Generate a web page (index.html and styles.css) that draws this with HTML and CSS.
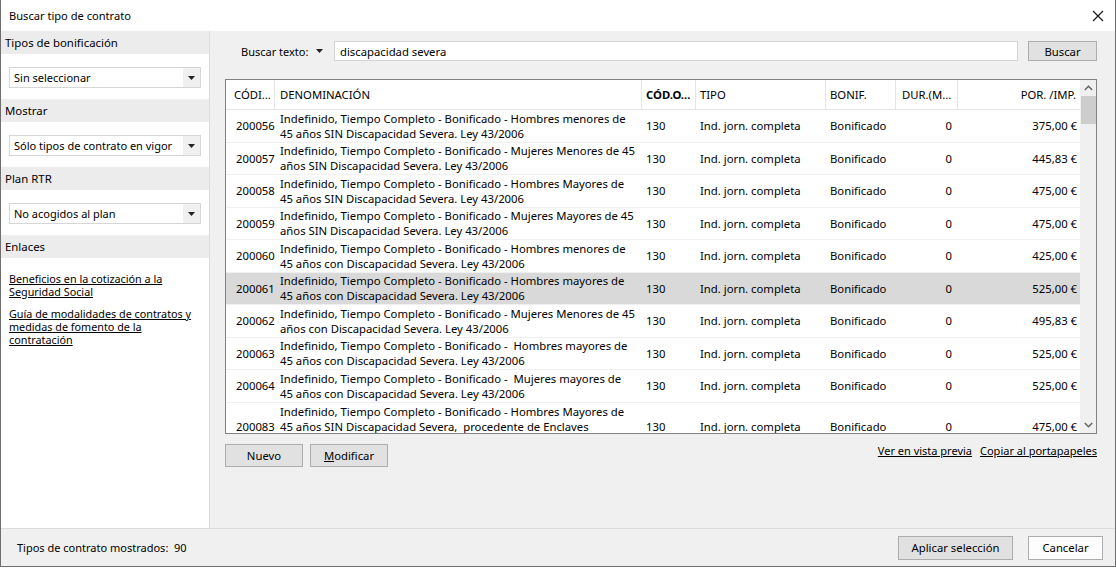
FILE: index.html
```html
<!DOCTYPE html>
<html lang="es">
<head>
<meta charset="utf-8">
<title>Buscar tipo de contrato</title>
<link rel="stylesheet" href="styles.css">
</head>
<body>
<div class="window">
  <div class="titlebar">
    <span class="title">Buscar tipo de contrato</span>
    <svg class="close" width="12" height="12" viewBox="0 0 12 12"><path d="M1 1L11 11M11 1L1 11" stroke="#111" stroke-width="1.1" fill="none"/></svg>
  </div>
  <div class="content">
    <aside class="side">
      <div class="side-head">Tipos de bonificación</div>
      <div class="side-box"><div class="select"><span>Sin seleccionar</span><span class="drop"><svg width="7" height="4" viewBox="0 0 7 4"><path d="M0 0H7L3.5 4Z" fill="#222"/></svg></span></div></div>
      <div class="side-head">Mostrar</div>
      <div class="side-box"><div class="select"><span>Sólo tipos de contrato en vigor</span><span class="drop"><svg width="7" height="4" viewBox="0 0 7 4"><path d="M0 0H7L3.5 4Z" fill="#222"/></svg></span></div></div>
      <div class="side-head">Plan RTR</div>
      <div class="side-box"><div class="select"><span>No acogidos al plan</span><span class="drop"><svg width="7" height="4" viewBox="0 0 7 4"><path d="M0 0H7L3.5 4Z" fill="#222"/></svg></span></div></div>
      <div class="side-head">Enlaces</div>
      <div class="links">
        <a class="slink" href="#">Beneficios en la cotización a la <br>Seguridad Social</a>
        <a class="slink" href="#">Guía de modalidades de contratos y <br>medidas de fomento de la <br>contratación</a>
      </div>
    </aside>
    <main class="main">
      <div class="search">
        <span class="search-label">Buscar texto:</span>
        <svg class="search-drop" width="7" height="4" viewBox="0 0 7 4"><path d="M0 0H7L3.5 4Z" fill="#222"/></svg>
        <div class="input">discapacidad severa</div>
        <button class="btn btn-search">Buscar</button>
      </div>
      <div class="table">
        <div class="grid">
          <div class="hcell c-code">CÓDI...</div>
          <div class="hcell c-den">DENOMINACIÓN</div>
          <div class="hcell c-cod bold">CÓD.O...</div>
          <div class="hcell c-tipo">TIPO</div>
          <div class="hcell c-bon">BONIF.</div>
          <div class="hcell c-dur">DUR.(M...</div>
          <div class="hcell c-por">POR. /IMP.</div>

          <div class="row">
            <div class="cell c-code">200056</div>
            <div class="cell c-den"><span>Indefinido, Tiempo Completo - Bonificado - Hombres menores de</span><span>45 años SIN Discapacidad Severa. Ley 43/2006</span></div>
            <div class="cell c-cod">130</div><div class="cell c-tipo">Ind. jorn. completa</div><div class="cell c-bon">Bonificado</div><div class="cell c-dur">0</div><div class="cell c-por">375,00 €</div>
          </div>
          <div class="row">
            <div class="cell c-code">200057</div>
            <div class="cell c-den"><span>Indefinido, Tiempo Completo - Bonificado - Mujeres Menores de 45</span><span>años SIN Discapacidad Severa. Ley 43/2006</span></div>
            <div class="cell c-cod">130</div><div class="cell c-tipo">Ind. jorn. completa</div><div class="cell c-bon">Bonificado</div><div class="cell c-dur">0</div><div class="cell c-por">445,83 €</div>
          </div>
          <div class="row">
            <div class="cell c-code">200058</div>
            <div class="cell c-den"><span>Indefinido, Tiempo Completo - Bonificado - Hombres Mayores de</span><span>45 años SIN Discapacidad Severa. Ley 43/2006</span></div>
            <div class="cell c-cod">130</div><div class="cell c-tipo">Ind. jorn. completa</div><div class="cell c-bon">Bonificado</div><div class="cell c-dur">0</div><div class="cell c-por">475,00 €</div>
          </div>
          <div class="row">
            <div class="cell c-code">200059</div>
            <div class="cell c-den"><span>Indefinido, Tiempo Completo - Bonificado - Mujeres Mayores de 45</span><span>años SIN Discapacidad Severa. Ley 43/2006</span></div>
            <div class="cell c-cod">130</div><div class="cell c-tipo">Ind. jorn. completa</div><div class="cell c-bon">Bonificado</div><div class="cell c-dur">0</div><div class="cell c-por">475,00 €</div>
          </div>
          <div class="row">
            <div class="cell c-code">200060</div>
            <div class="cell c-den"><span>Indefinido, Tiempo Completo - Bonificado - Hombres menores de</span><span>45 años con Discapacidad Severa. Ley 43/2006</span></div>
            <div class="cell c-cod">130</div><div class="cell c-tipo">Ind. jorn. completa</div><div class="cell c-bon">Bonificado</div><div class="cell c-dur">0</div><div class="cell c-por">425,00 €</div>
          </div>
          <div class="row selected">
            <div class="cell c-code">200061</div>
            <div class="cell c-den"><span>Indefinido, Tiempo Completo - Bonificado - Hombres mayores de</span><span>45 años con Discapacidad Severa. Ley 43/2006</span></div>
            <div class="cell c-cod">130</div><div class="cell c-tipo">Ind. jorn. completa</div><div class="cell c-bon">Bonificado</div><div class="cell c-dur">0</div><div class="cell c-por">525,00 €</div>
          </div>
          <div class="row">
            <div class="cell c-code">200062</div>
            <div class="cell c-den"><span>Indefinido, Tiempo Completo - Bonificado - Mujeres Menores de 45</span><span>años con Discapacidad Severa. Ley 43/2006</span></div>
            <div class="cell c-cod">130</div><div class="cell c-tipo">Ind. jorn. completa</div><div class="cell c-bon">Bonificado</div><div class="cell c-dur">0</div><div class="cell c-por">495,83 €</div>
          </div>
          <div class="row">
            <div class="cell c-code">200063</div>
            <div class="cell c-den"><span>Indefinido, Tiempo Completo - Bonificado -  Hombres mayores de</span><span>45 años con Discapacidad Severa. Ley 43/2006</span></div>
            <div class="cell c-cod">130</div><div class="cell c-tipo">Ind. jorn. completa</div><div class="cell c-bon">Bonificado</div><div class="cell c-dur">0</div><div class="cell c-por">525,00 €</div>
          </div>
          <div class="row">
            <div class="cell c-code">200064</div>
            <div class="cell c-den"><span>Indefinido, Tiempo Completo - Bonificado -  Mujeres mayores de</span><span>45 años con Discapacidad Severa. Ley 43/2006</span></div>
            <div class="cell c-cod">130</div><div class="cell c-tipo">Ind. jorn. completa</div><div class="cell c-bon">Bonificado</div><div class="cell c-dur">0</div><div class="cell c-por">525,00 €</div>
          </div>
          <div class="row tall">
            <div class="cell c-code">200083</div>
            <div class="cell c-den"><span>Indefinido, Tiempo Completo - Bonificado - Hombres Mayores de</span><span>45 años SIN Discapacidad Severa,  procedente de Enclaves</span></div>
            <div class="cell c-cod">130</div><div class="cell c-tipo">Ind. jorn. completa</div><div class="cell c-bon">Bonificado</div><div class="cell c-dur">0</div><div class="cell c-por">475,00 €</div>
          </div>
        </div>
        <div class="scrollbar">
          <svg class="arrow" width="9" height="6" viewBox="0 0 9 6"><path d="M0.8 5L4.5 1.3L8.2 5" stroke="#606060" stroke-width="1.4" fill="none"/></svg>
          <div class="thumb"></div>
          <div class="track"></div>
          <svg class="arrow" width="9" height="6" viewBox="0 0 9 6"><path d="M0.8 1L4.5 4.7L8.2 1" stroke="#606060" stroke-width="1.4" fill="none"/></svg>
        </div>
      </div>
      <div class="actions">
        <button class="btn btn-small">Nuevo</button>
        <button class="btn btn-small"><u>M</u>odificar</button>
        <span class="spacer"></span>
        <a class="mlink" href="#">Ver en vista previa</a>
        <a class="mlink" href="#">Copiar al portapapeles</a>
      </div>
    </main>
  </div>
  <div class="footer">
    <span class="count">Tipos de contrato mostrados:&nbsp; 90</span>
    <button class="btn btn-apply">Aplicar selección</button>
    <button class="btn btn-cancel">Cancelar</button>
  </div>
</div>
</body>
</html>
```
FILE: styles.css
```css
* { box-sizing: border-box; }
html, body { margin: 0; padding: 0; }
body {
  width: 1116px;
  height: 568px;
  background: #ffffff;
  font-family: "Noto Sans", "Open Sans", sans-serif;
  font-size: 11.3px;
  color: #000;
  overflow: hidden;
}
.window {
  width: 1116px;
  height: 567px;
  border: 1px solid #6e6e6e;
  border-top: none;
  display: flex;
  flex-direction: column;
  background: #f0f0f0;
}
.titlebar {
  height: 31px;
  background: #fff;
  display: flex;
  align-items: center;
  padding: 0 9px 0 8px;
  flex: none;
}
.title { font-size: 11.1px; flex: 1; }
.close { margin-right: 2px; }
.content {
  flex: 1;
  display: flex;
  min-height: 0;
}
.side {
  width: 209px;
  background: #fff;
  border-right: 1px solid #dcdcdc;
  flex: none;
  display: flex;
  flex-direction: column;
}
.side-head {
  height: 23px;
  background: #ececec;
  padding-left: 4px;
  display: flex;
  align-items: center;
  font-size: 11.4px;
}
.side-box { padding: 13px 8px 11px 8px; }
.select {
  height: 21px;
  border: 1px solid #d6d6d6;
  background: #fff;
  display: flex;
  align-items: center;
  padding-left: 4px;
  font-size: 11px;
}
.select span:first-child { flex: 1; white-space: nowrap; overflow: hidden; }
.drop {
  width: 17px;
  height: 100%;
  background: #f0f0f0;
  display: flex;
  align-items: center;
  justify-content: center;
}
.links {
  padding: 14px 8px 0 8px;
  display: flex;
  flex-direction: column;
  gap: 9px;
}
.slink {
  color: #000;
  font-size: 10.8px;
  line-height: 13px;
  text-decoration: underline;
}
.main {
  flex: 1;
  display: flex;
  flex-direction: column;
  padding: 10px 18px 0 15px;
  min-width: 0;
}
.search {
  height: 20px;
  display: flex;
  align-items: center;
}
.search-label { margin-left: 16px; width: 65px; white-space: nowrap; flex: none; font-size: 11px; }
.search-drop { margin-left: 10px; margin-right: 11px; flex: none; }
.input {
  flex: 1;
  height: 20px;
  border: 1px solid #d4d4d4;
  background: #fff;
  padding-left: 5px;
  display: flex;
  align-items: center;
  white-space: nowrap;
}
.btn {
  font-family: inherit;
  font-size: 11.3px;
  color: #000;
  background: #e1e1e1;
  border: 1px solid #adadad;
  padding: 0;
  display: flex;
  align-items: center;
  justify-content: center;
  white-space: nowrap;
}
.btn-search { width: 69px; height: 20px; margin-left: 10px; flex: none; }
.table {
  margin-top: 18px;
  width: 872px;
  height: 355px;
  border: 1px solid #828282;
  background: #fff;
  display: flex;
  overflow: hidden;
  flex: none;
}
.grid {
  width: 854px;
  display: grid;
  grid-template-columns: 49px 367px 54px 130px 70px 62px 122px;
  grid-auto-rows: max-content;
  align-content: start;
}
.hcell {
  height: 30px;
  border-right: 1px solid #e5e5e5;
  border-bottom: 1px solid #e5e5e5;
  display: flex;
  align-items: center;
  padding-left: 4px;
  white-space: nowrap;
  overflow: hidden;
}
.hcell.bold { font-weight: bold; }
.hcell.c-code { padding-left: 8px; }
.hcell.c-den { padding-left: 5px; }
.hcell.c-dur { padding-left: 6px; }
.hcell.c-por { justify-content: flex-end; padding-right: 4px; border-right: none; }
.row {
  grid-column: 1 / -1;
  display: grid;
  grid-template-columns: subgrid;
  height: 32.5px;
  border-bottom: 1px solid #f0f0f0;
}
.row.tall { height: 48px; }
.row.selected { background: #d9d9d9; }
.cell {
  display: flex;
  align-items: center;
  padding-left: 4px;
  white-space: nowrap;
  overflow: hidden;
}
.cell.c-code { padding-left: 10px; }
.cell.c-den {
  flex-direction: column;
  align-items: flex-start;
  justify-content: center;
  line-height: 15px;
  padding-left: 5px;
}
.row.tall .cell.c-den { justify-content: flex-start; padding-top: 1px; }
.cell.c-den span { white-space: pre; }
.cell.c-dur { justify-content: flex-end; padding-right: 6px; }
.cell.c-por { justify-content: flex-end; padding-right: 3px; }
.scrollbar {
  width: 16px;
  background: #f0f0f0;
  display: flex;
  flex-direction: column;
  align-items: center;
}
.arrow { flex: none; margin: 5px 0; }
.thumb {
  width: 15px;
  height: 28px;
  background: #cdcdcd;
  flex: none;
}
.track { flex: 1; }
.actions {
  margin-top: 10px;
  width: 872px;
  display: flex;
  align-items: center;
  gap: 7px;
}
.btn-small { width: 78px; height: 23px; }
.spacer { flex: 1; }
.mlink { color: #000; text-decoration: underline; margin-top: -10px; font-size: 11px; }
.mlink + .mlink { margin-left: 1px; }
.footer {
  height: 38px;
  flex: none;
  border-top: 1px solid #dcdcdc;
  display: flex;
  align-items: center;
  padding: 0 12px 0 16px;
}
.count { flex: 1; font-size: 11px; }
.btn-apply { width: 115px; height: 24px; }
.btn-cancel { width: 75px; height: 24px; margin-left: 15px; background: #fdfdfd; }
```
